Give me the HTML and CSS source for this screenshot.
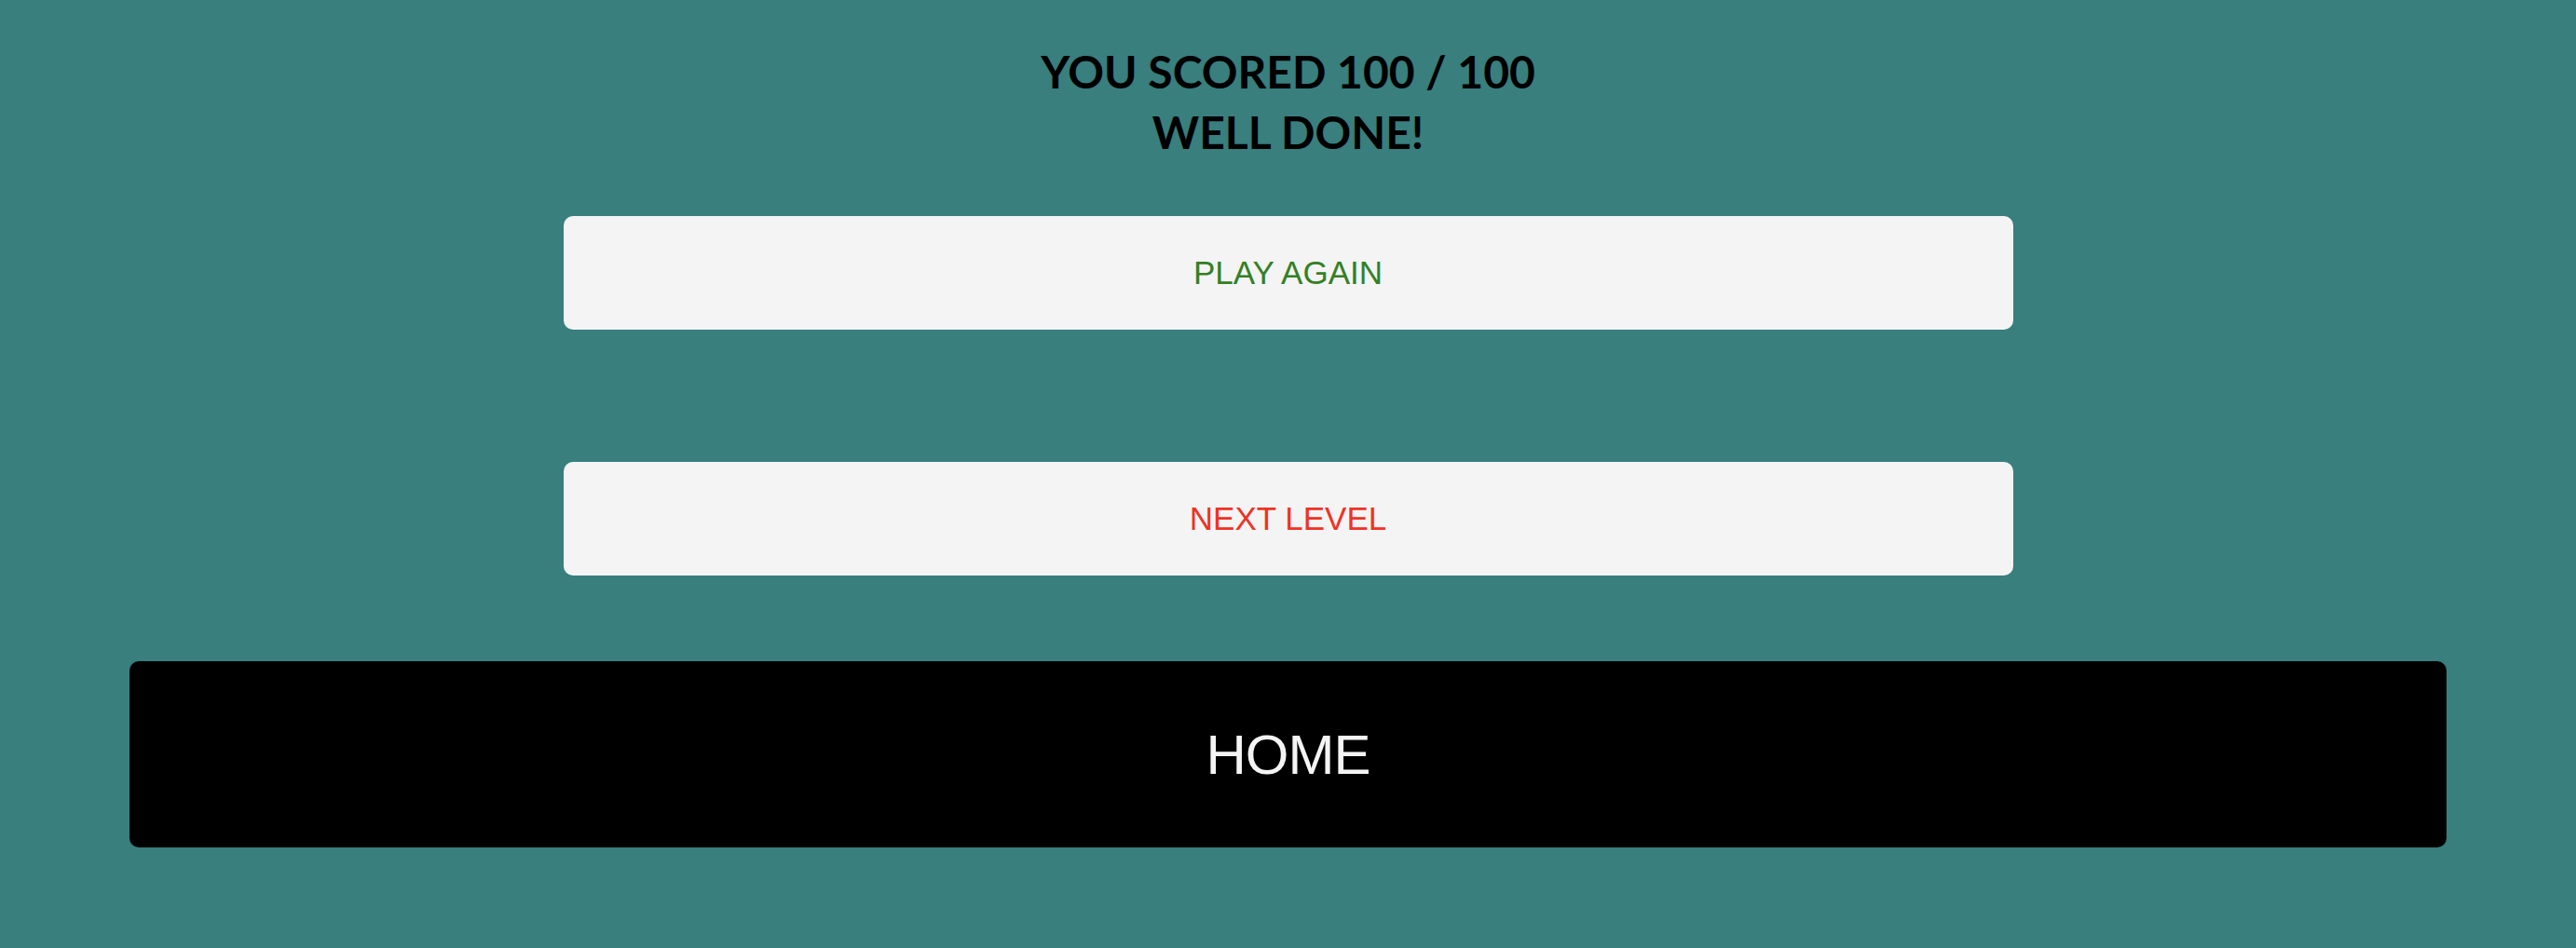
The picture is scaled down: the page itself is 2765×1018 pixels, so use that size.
FILE: index.html
```html
<!DOCTYPE html>
<html lang="en">
<head>
<meta charset="utf-8">
<title>Quiz Result</title>
<link rel="stylesheet" href="styles.css">
</head>
<body>
<main class="result">
  <h1 class="score">YOU SCORED 100 / 100<br>WELL DONE!</h1>
  <button class="btn btn-light btn-play">PLAY AGAIN</button>
  <button class="btn btn-light btn-next">NEXT LEVEL</button>
  <button class="btn btn-home">HOME</button>
</main>
</body>
</html>
```

FILE: styles.css
```css
html, body {
  margin: 0;
  padding: 0;
}
body {
  background: #387f7e;
  min-height: 1018px;
  font-family: "Liberation Sans", Arial, sans-serif;
}
.result {
  display: flex;
  flex-direction: column;
  align-items: center;
  padding-top: 44px;
}
.score {
  margin: 0;
  font-family: Lato, "Liberation Sans", sans-serif;
  font-weight: 700;
  font-size: 48px;
  line-height: 65px;
  letter-spacing: 0;
  text-align: center;
  color: #000;
}
.btn {
  border: none;
  border-radius: 10px;
  font-family: "Liberation Sans", Arial, sans-serif;
  display: flex;
  align-items: center;
  justify-content: center;
  padding: 0;
}
.btn-light {
  width: 1556px;
  height: 122px;
  background: #f4f4f4;
  font-size: 35px;
}
.btn-play {
  margin-top: 58px;
  color: #338024;
}
.btn-next {
  margin-top: 142px;
  color: #ee3324;
}
.btn-home {
  margin-top: 92px;
  width: 2487px;
  height: 200px;
  background: #000;
  color: #f4f4f4;
  font-size: 60px;
  letter-spacing: -1px;
}
```
